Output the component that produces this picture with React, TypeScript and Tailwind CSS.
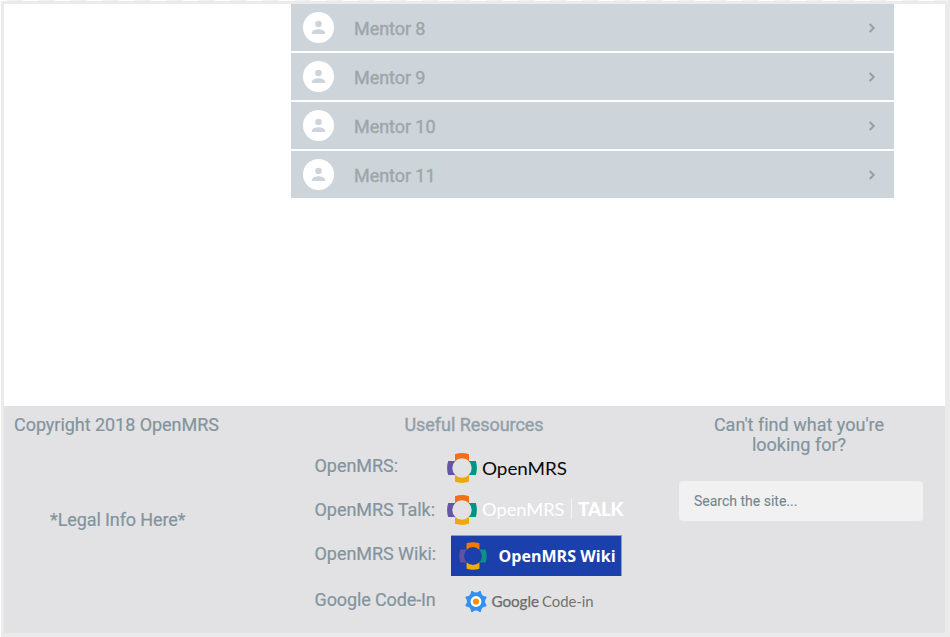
import React from "react";

const mentors = ["Mentor 8", "Mentor 9", "Mentor 10", "Mentor 11"];

function PersonIcon() {
  return (
    <svg width="31" height="31" viewBox="0 0 31 31" className="shrink-0">
      <circle cx="15.5" cy="15.5" r="15.5" fill="#fff" />
      <circle cx="15.5" cy="12" r="3.3" fill="#cdd5da" />
      <path d="M8.9 22v-1.4c0-2.2 4.4-3.4 6.6-3.4s6.6 1.2 6.6 3.4V22z" fill="#cdd5da" />
    </svg>
  );
}

function Petals() {
  const d = "M8 1.2Q15 -1 22 1.2V8.3A9.7 9.7 0 0 0 8 8.3Z";
  return (
    <g>
      <path d={d} fill="#f36f17" />
      <path d={d} fill="#009583" transform="rotate(90 15 15)" />
      <path d={d} fill="#eea70f" transform="rotate(180 15 15)" />
      <path d={d} fill="#6555a8" transform="rotate(270 15 15)" />
    </g>
  );
}

function OpenMrsLogo() {
  return (
    <svg width="122" height="30" viewBox="0 0 122 30" className="block">
      <Petals />
      <text x="35" y="21.5" textLength="85" lengthAdjust="spacingAndGlyphs" fontSize="17.5" fill="#0a0a0a" className="font-['Lato',sans-serif]">OpenMRS</text>
    </svg>
  );
}

function TalkLogo() {
  return (
    <svg width="180" height="30" viewBox="0 0 180 30" className="block">
      <Petals />
      <text x="35" y="21" textLength="82.5" lengthAdjust="spacingAndGlyphs" fontSize="17.5" fill="#fff" className="font-['Lato',sans-serif]">OpenMRS</text>
      <path d="M124.5 4v20" stroke="#f3f3f4" />
      <text x="131" y="21" textLength="45.5" lengthAdjust="spacingAndGlyphs" fontSize="18" fontWeight="900" fill="#fff" className="font-['Lato',sans-serif]">TALK</text>
    </svg>
  );
}

function WikiLogo() {
  return (
    <svg width="171" height="41" viewBox="0 0 171 41" className="block">
      <rect width="171" height="41" fill="#8a9ccb" />
      <rect y="1" width="170" height="40" fill="#1b40ab" />
      <g transform="translate(8.2 7.2) scale(.92)">
        <path d="M8 1.2Q15 -1 22 1.2V8.3A9.7 9.7 0 0 0 8 8.3Z" fill="#f77700" />
        <path d="M8 1.2Q15 -1 22 1.2V8.3A9.7 9.7 0 0 0 8 8.3Z" fill="#0a9282" transform="rotate(90 15 15)" />
        <path d="M8 1.2Q15 -1 22 1.2V8.3A9.7 9.7 0 0 0 8 8.3Z" fill="#f0ad00" transform="rotate(180 15 15)" />
        <path d="M8 1.2Q15 -1 22 1.2V8.3A9.7 9.7 0 0 0 8 8.3Z" fill="#64519f" transform="rotate(270 15 15)" />
      </g>
      <text x="47.5" y="27" textLength="117" fontSize="16" fontWeight="700" fill="#fff" className="font-['Open_Sans',sans-serif]">OpenMRS Wiki</text>
    </svg>
  );
}

function CodeInLogo() {
  return (
    <svg width="130" height="24" viewBox="0 0 130 24" className="block">
      <g transform="translate(11 12.5)">
        {[0, 45, 90, 135, 180, 225, 270, 315].map((a) => (
          <path key={a} d="M0 0L-4.5 -8.6L-4.7 -9.9Q-4.2 -10.8 -3.2 -10.3Q0 -7.6 3.2 -10.3Q4.2 -10.8 4.7 -9.9L4.5 -8.6Z" fill="#3290f2" transform={`rotate(${a})`} />
        ))}
        <circle r="5.4" fill="#fff" />
        <circle r="3.1" fill="#ff9100" />
      </g>
      <text x="26.5" y="18" textLength="47.5" lengthAdjust="spacingAndGlyphs" fontSize="15.5" fill="#6b6b6b" stroke="#6b6b6b" strokeWidth=".25" className="font-['Lato',sans-serif]">Google</text>
      <text x="77" y="18" textLength="51.5" lengthAdjust="spacingAndGlyphs" fontSize="15" fill="#727272" className="font-['Lato',sans-serif]">Code-in</text>
    </svg>
  );
}

export default function App() {
  return (
    <div className="h-[637px] w-[950px] overflow-hidden bg-[repeating-linear-gradient(90deg,#fff_0px,#fff_7px,#f1f1f1_7px,#f1f1f1_23px,#fff_23px,#fff_32px)] pl-px pt-px font-['Roboto',sans-serif] text-[18px] leading-[21px] tracking-[-0.04px] text-[#83949d] [-webkit-text-stroke:0.2px]">
      <div className="flex h-[636px] w-[949px] flex-col border-t-[3px] border-r-[5px] border-b-4 border-l-[3px] border-[#ebebeb] bg-white">
        <main className="h-[402px] pl-[287px]">
          <ul className="flex w-[603px] flex-col gap-0.5">
            {mentors.map((name) => (
              <li key={name} className="flex h-[47px] items-center bg-[#cdd5da] pl-3 pr-[18px] text-[#9ea6a9]">
                <PersonIcon />
                <span className="ml-5 flex-1 pt-px tracking-[-0.06px] [-webkit-text-stroke:0.4px]">{name}</span>
                <svg width="8" height="10" viewBox="0 0 8 10" fill="none" stroke="#989fa1" strokeWidth="2">
                  <path d="M1.7 1L5.7 5L1.7 9" />
                </svg>
              </li>
            ))}
          </ul>
        </main>
        <footer className="flex flex-1 bg-[#e2e2e4] pt-2">
          <section className="w-[311px] pl-2.5">
            <p>Copyright 2018 OpenMRS</p>
            <p className="ml-9 mt-[74px] tracking-[-0.1px]">*Legal Info Here*</p>
          </section>
          <section className="w-[364px]">
            <h2 className="pr-[46px] text-center text-[#91a0a8] [-webkit-text-stroke:0.4px]">Useful Resources</h2>
            <div className="mt-[18px] flex h-[42px] items-start [-webkit-text-stroke:0]">
              <span className="-ml-[0.5px] w-[132.5px] pt-0.5 [-webkit-text-stroke:0.2px]">OpenMRS:</span>
              <OpenMrsLogo />
            </div>
            <div className="flex h-10 items-start [-webkit-text-stroke:0]">
              <span className="-ml-[0.5px] w-[132.5px] whitespace-nowrap pt-1 [-webkit-text-stroke:0.2px]">OpenMRS Talk:</span>
              <TalkLogo />
            </div>
            <div className="flex h-[54px] items-start [-webkit-text-stroke:0]">
              <span className="-ml-[0.5px] w-[136.5px] whitespace-nowrap pt-2 [-webkit-text-stroke:0.2px]">OpenMRS Wiki:</span>
              <WikiLogo />
            </div>
            <div className="flex items-start [-webkit-text-stroke:0]">
              <span className="-ml-[0.5px] w-[150.5px] tracking-[-0.12px] [-webkit-text-stroke:0.2px]">Google Code-In</span>
              <CodeInLogo />
            </div>
          </section>
          <section className="w-[244px]">
            <h2 className="-ml-1 text-center tracking-[0.01px]">Can't find what you're<br /><span className="block -mt-px">looking for?</span></h2>
            <input
              placeholder="Search the site..."
              className="mt-[26px] h-10 w-[244px] rounded-sm bg-[#f1f1f1] px-[15px] pb-px text-[14px] tracking-normal text-[#74868f] outline-none [-webkit-text-stroke:0.1px] placeholder:text-[#74868f]"
            />
          </section>
        </footer>
      </div>
    </div>
  );
}
